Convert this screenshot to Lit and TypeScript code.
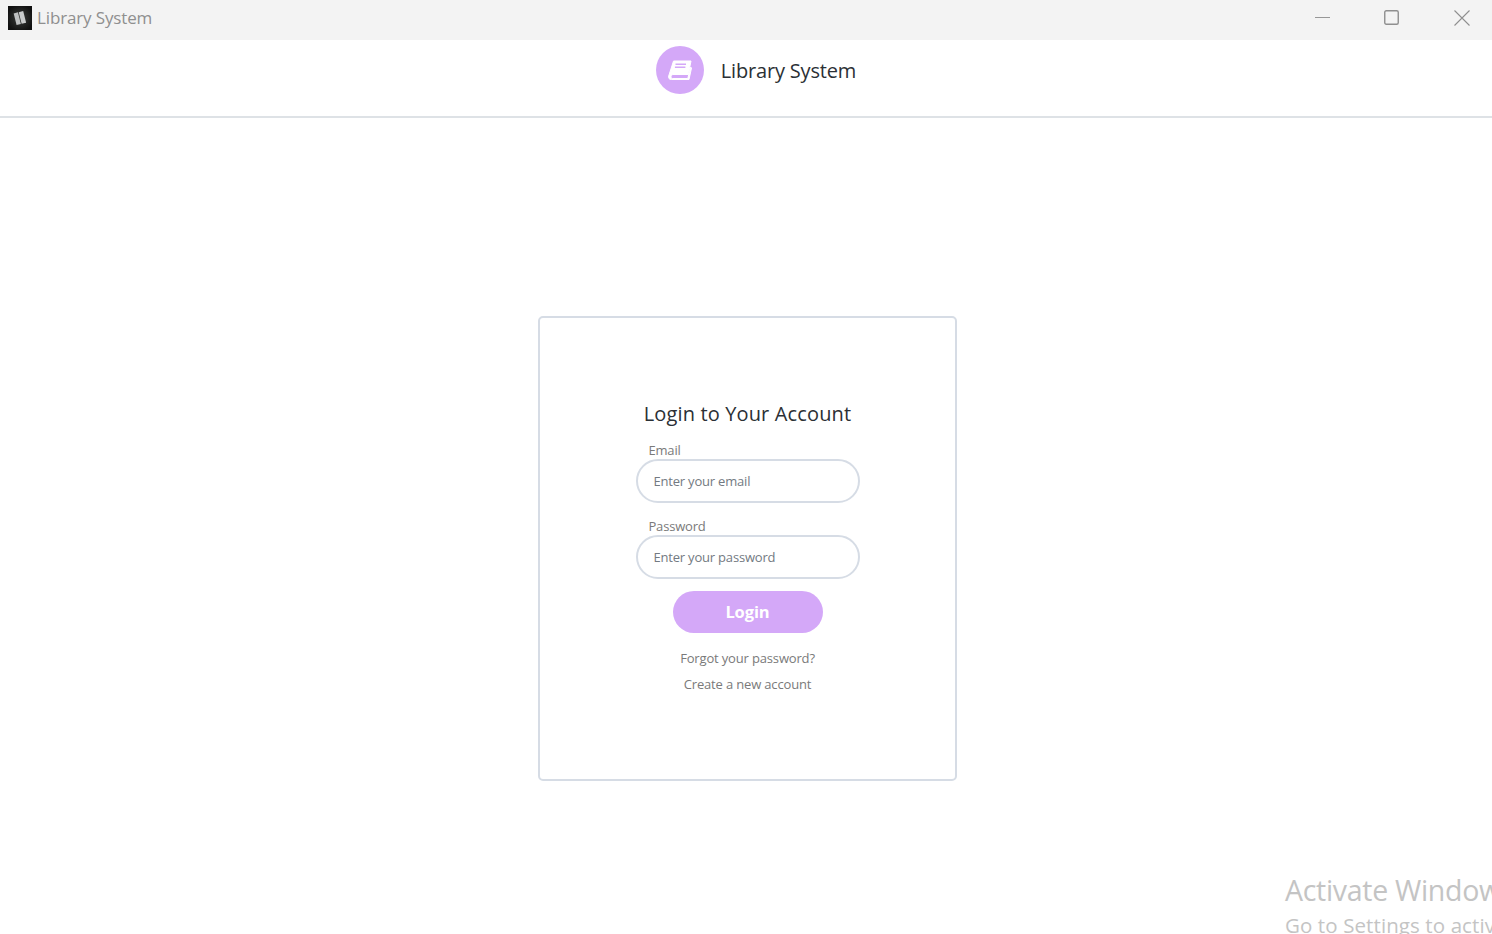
import { LitElement, html, css } from "lit";
import { customElement } from "lit/decorators.js";

@customElement("app-root")
export class AppRoot extends LitElement {
  static styles = css`
    :host { display: block; height: 934px; overflow: hidden; position: relative; background: #fff; font-family: "Open Sans", "Noto Sans", sans-serif; }
    .titlebar { height: 40px; background: #f3f3f3; display: flex; align-items: center; padding-left: 8px; padding-bottom: 5px; box-sizing: border-box; }
    .app-icon { width: 24px; height: 24px; background: radial-gradient(circle, #3c3e3c 0%, #111 80%); display: flex; align-items: center; justify-content: center; }
    .tb-title { margin-left: 5px; font-size: 17px; color: #8f8f8f; letter-spacing: -0.14px; }
    .controls { margin-left: auto; display: flex; align-items: center; }
    .controls svg { display: block; }
    .min { margin-right: 54px; }
    .max { margin-right: 55px; }
    .cl { margin-right: 22px; }
    .header { height: 78px; box-sizing: border-box; border-bottom: 2px solid #dee2e6; display: flex; justify-content: center; padding: 6px 0 0 20px; }
    .brand { display: flex; align-items: flex-start; gap: 17px; }
    .logo { width: 48px; height: 48px; border-radius: 50%; background: #d4a8f8; display: flex; align-items: center; justify-content: center; }
    .brand-name { font-size: 20px; line-height: 50px; color: #2b3035; letter-spacing: -0.18px; }
    .main { display: flex; justify-content: center; padding: 198px 0 0 3px; }
    .card { width: 419px; height: 465px; box-sizing: border-box; border: 2px solid #d6dce5; border-radius: 5px; display: flex; flex-direction: column; align-items: center; padding-top: 82px; }
    h1 { margin: 0; font-size: 20px; font-weight: 400; line-height: 28px; color: #2b3035; letter-spacing: 0.14px; }
    .field { width: 224px; margin-top: 15px; display: flex; flex-direction: column; }
    .field + .field { margin-top: 16px; }
    label { font-size: 13px; line-height: 14px; margin: 0 0 2px 13px; color: #7a7a7a; letter-spacing: -0.2px; }
    .input { height: 44px; box-sizing: border-box; border: 2px solid #d6dce5; border-radius: 22px; padding-left: 16px; font-size: 13px; line-height: 40px; color: #737a82; letter-spacing: -0.2px; }
    .btn { margin-top: 12px; width: 150px; height: 42px; border-radius: 21px; background: #d4a8f8; color: #fff; font-weight: 700; font-size: 16.500px; line-height: 42px; text-align: center; letter-spacing: -0.1px; }
    .link { font-size: 13px; line-height: 26px; color: #7a7a7a; letter-spacing: -0.16px; }
    .links { margin-top: 12px; display: flex; flex-direction: column; align-items: center; }
    .wm { position: absolute; left: 1285px; top: 871px; white-space: nowrap; color: #c4c4c4; }
    .wm1 { font-size: 28.500px; line-height: 38px; letter-spacing: -0.3px; }
    .wm2 { font-size: 20.500px; line-height: 33px; letter-spacing: 0.1px; }
  `;

  render() {
    return html`
      <div class="titlebar">
        <div class="app-icon">
          <svg width="14" height="16" viewBox="0 0 14 16">
            <g transform="rotate(-14 7 8)">
              <rect x="2" y="2" width="4.400" height="12" fill="#bfc1c2"/>
              <rect x="7.200" y="2" width="4.600" height="12" fill="#c9cbcc"/>
            </g>
          </svg>
        </div>
        <span class="tb-title">Library System</span>
        <div class="controls">
          <svg class="min" width="15" height="1" viewBox="0 0 15 1"><rect width="15" height="1" fill="#979797"/></svg>
          <svg class="max" width="15" height="15" viewBox="0 0 15 15"><rect x=".75" y=".75" width="13.5" height="13.5" rx="1.5" fill="none" stroke="#8f8f8f" stroke-width="1.4"/></svg>
          <svg class="cl" width="16" height="16" viewBox="0 0 16 16"><path d="M.5.5l15 15M15.500.5l-15 15" fill="none" stroke="#8f8f8f" stroke-width="1.1"/></svg>
        </div>
      </div>
      <div class="header">
        <div class="brand">
          <div class="logo">
            <svg width="26" height="22" viewBox="0 0 26 22">
              <path d="M6.500 2H24L21.300 15.500H6C3.800 15.500 3 19.500 5.500 19.500H20.800L23.500 8 24.500 9 22 20.500H4.500C2 20.500 1.200 19 1.700 17z" fill="#fff" stroke="#fff" stroke-width="1" stroke-linejoin="round"/>
              <rect x="8.500" y="4.500" width="10.500" height="1.500" fill="#d4a8f8"/>
              <rect x="7.900" y="7.500" width="10.500" height="1.500" fill="#d4a8f8"/>
            </svg>
          </div>
          <span class="brand-name">Library System</span>
        </div>
      </div>
      <div class="main">
        <div class="card">
          <h1>Login to Your Account</h1>
          <div class="field"><label>Email</label><div class="input">Enter your email</div></div>
          <div class="field"><label>Password</label><div class="input">Enter your password</div></div>
          <div class="btn">Login</div>
          <div class="links">
            <span class="link">Forgot your password?</span>
            <span class="link">Create a new account</span>
          </div>
        </div>
      </div>
      <div class="wm">
        <div class="wm1">Activate Windows</div>
        <div class="wm2">Go to Settings to activate Windows.</div>
      </div>
    `;
  }
}
